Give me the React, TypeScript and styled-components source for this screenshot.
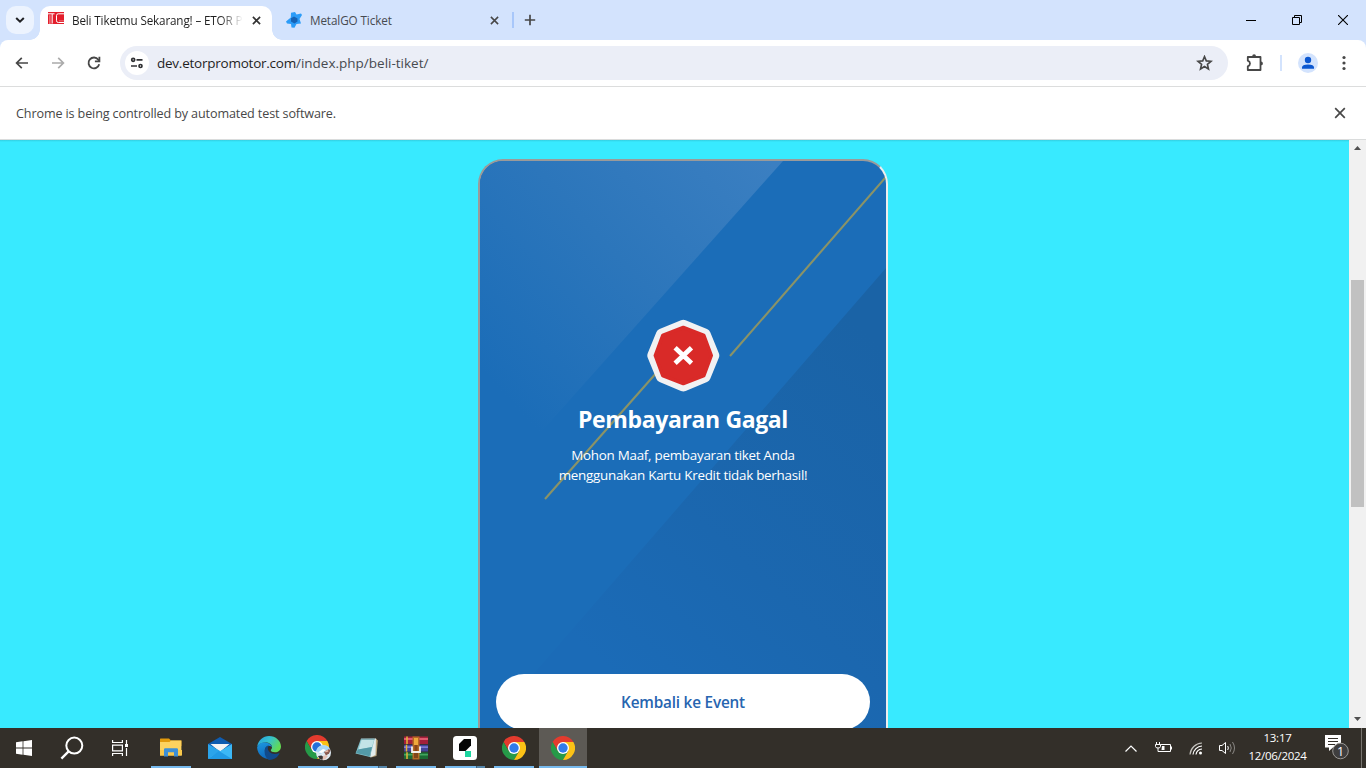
import React from "react";
import styled, { createGlobalStyle } from "styled-components";

const GlobalStyle = createGlobalStyle`
  *, *::before, *::after { box-sizing: border-box; }
  html, body { margin: 0; padding: 0; overflow: hidden; }
  body { font-family: "Open Sans", "Noto Sans", sans-serif; }
  svg { display: block; flex: none; }
`;

const Screen = styled.div`
  width: 1366px;
  height: 768px;
  display: flex;
  flex-direction: column;
  overflow: hidden;
  background: #fff;
`;

const Label = styled.span<{ $size: number; $track?: number; $weight?: number; $color?: string }>`
  font-size: ${(p) => p.$size}px;
  letter-spacing: ${(p) => p.$track ?? 0}px;
  font-weight: ${(p) => p.$weight ?? 400};
  color: ${(p) => p.$color ?? "#1f1f1f"};
  white-space: nowrap;
`;

const Spacer = styled.i<{ $width: number }>`
  flex: none;
  width: ${(p) => p.$width}px;
`;

/* ---------- Tab strip ---------- */

const TabStrip = styled.header`
  flex: none;
  height: 40px;
  display: flex;
  align-items: flex-start;
  background: #d3e3fd;
`;

const TabSearch = styled.button`
  width: 28px;
  height: 28px;
  margin: 6px 6px 0;
  padding: 0;
  border: 0;
  border-radius: 10px;
  background: #ecf3fe;
  display: grid;
  place-items: center;
`;

const Tab = styled.div<{ $active?: boolean }>`
  position: relative;
  width: ${(p) => (p.$active ? 232 : 240)}px;
  height: 34px;
  margin-top: 6px;
  padding: 0 9px 6px ${(p) => (p.$active ? 8 : 14)}px;
  display: flex;
  align-items: center;
  border-radius: 10px 10px 0 0;
  background: ${(p) => (p.$active ? "#fff" : "transparent")};

  &::before,
  &::after {
    content: ${(p) => (p.$active ? '""' : "none")};
    position: absolute;
    bottom: 0;
    width: 10px;
    height: 10px;
  }
  &::before {
    left: -10px;
    background: radial-gradient(circle at 0 0, transparent 9.5px, #fff 10px);
  }
  &::after {
    right: -10px;
    background: radial-gradient(circle at 100% 0, transparent 9.5px, #fff 10px);
  }
`;

const TabTitle = styled.div<{ $fade?: boolean }>`
  flex: 1;
  margin: 0 8px;
  display: flex;
  line-height: 16px;
  ${(p) => p.$fade && "margin-right: 6px; mask-image: linear-gradient(90deg, #000 148px, transparent 171px);"}
`;

const StripDivider = styled.i`
  width: 2px;
  height: 16px;
  margin-top: 12px;
  background: #a8c7fa;
`;

const NewTab = styled.div`
  margin: 14px 0 0 10px;
`;

const WindowControls = styled.div`
  margin-left: auto;
  display: flex;
  height: 40px;
`;

const WindowButton = styled.div`
  width: 46px;
  display: grid;
  place-items: center;
`;

/* ---------- Toolbar ---------- */

const ToolbarBack = styled.div`
  flex: none;
  background: #d3e3fd;
`;

const Toolbar = styled.nav`
  height: 47px;
  border-bottom: 1px solid #dcdddd;
  border-radius: 8px 8px 0 0;
  background: #fff;
  display: flex;
  align-items: center;
  padding-left: 12px;
`;

const NavIcon = styled.div`
  width: 20px;
  margin-right: 16px;
  display: grid;
  place-items: center;
`;

const Omnibox = styled.div`
  width: 1108px;
  height: 34px;
  border-radius: 17px;
  background: #ebeef7;
  display: flex;
  align-items: center;
  padding: 0 15px 0 5px;
`;

const SiteInfo = styled.div`
  width: 24px;
  height: 24px;
  margin-right: 8px;
  border-radius: 50%;
  background: #fff;
  display: grid;
  place-items: center;
`;

const Url = styled.div`
  flex: 1;
  display: flex;
  line-height: 20px;
`;

const ToolbarActions = styled.div`
  flex: 1;
  display: flex;
  align-items: center;
  padding-left: 17px;
`;

const ToolbarDivider = styled.i`
  width: 2px;
  height: 16px;
  margin: 0 16px 0 17px;
  background: #d3e3fd;
`;

const Avatar = styled.div`
  width: 20px;
  height: 20px;
  margin-right: 24px;
  border-radius: 50%;
  overflow: hidden;
  background: #d3e3fd;
`;

/* ---------- Info bar ---------- */

const InfoBar = styled.div`
  flex: none;
  height: 53px;
  border-bottom: 1px solid #dadcdc;
  background: #fff;
  display: flex;
  align-items: center;
  justify-content: space-between;
  padding: 0 20px 0 16px;
`;

/* ---------- Page ---------- */

const Viewport = styled.div`
  flex: none;
  height: 588px;
  display: flex;
`;

const Page = styled.main`
  width: 1349px;
  display: flex;
  justify-content: center;
  align-items: flex-start;
  padding: 19px 0 0 17px;
  background: linear-gradient(#33cfe1, #38eaff 2px);
  overflow: hidden;
`;

const PhoneCard = styled.section`
  position: relative;
  width: 410px;
  height: 600px;
  border: 2px solid;
  border-color: #9a9a9a #eee #eee #9a9a9a;
  border-radius: 25px;
  overflow: hidden;
  background: #1b6db8;
`;

const CardArt = styled.svg`
  position: absolute;
  top: 0;
  left: 0;
`;

const CardContent = styled.div`
  position: relative;
  display: flex;
  flex-direction: column;
  align-items: center;
  padding-top: 157px;
`;

const Heading = styled.h1`
  margin: 9px 0 0;
  line-height: 36px;
  font-size: 23px;
  font-weight: 700;
  letter-spacing: -0.37px;
  color: #fff;
`;

const Message = styled.p`
  width: 256px;
  margin: 8px 0 0;
  text-align: center;
  font-size: 13.4px;
  line-height: 20px;
  letter-spacing: -0.26px;
  color: #fff;
`;

const BackButton = styled.button`
  width: 374px;
  height: 56px;
  margin: 189px 0 0;
  padding: 0;
  border: 0;
  border-radius: 28px;
  background: #fff;
  color: #2765b0;
  font: 600 15.3px "Open Sans", sans-serif;
  letter-spacing: -0.19px;
`;

const Scrollbar = styled.div`
  width: 17px;
  display: flex;
  flex-direction: column;
  align-items: center;
  background: #f1f1f1;
`;

const ScrollArrow = styled.div`
  height: 17px;
  width: 17px;
  padding-bottom: 2px;
  display: grid;
  place-items: center;
`;

const ScrollThumb = styled.div`
  width: 13px;
  height: 227px;
  margin: 123px 0 auto;
  background: #c1c1c1;
`;

/* ---------- Taskbar ---------- */

const Taskbar = styled.footer`
  flex: none;
  height: 40px;
  display: flex;
  background: #332f29;
`;

const TaskItem = styled.div<{ $width?: number; $focused?: boolean }>`
  width: ${(p) => p.$width ?? 49}px;
  height: 40px;
  display: grid;
  place-items: center;
  position: relative;
  &::before {
    content: "";
    position: absolute;
    z-index: 0;
    inset: 0 0 0 1px;
    background: ${(p) => (p.$focused ? "#5d5a55" : "transparent")};
  }
  svg { position: relative; }
`;

const RunningLine = styled.i<{ $full?: boolean; $stacked?: boolean }>`
  position: absolute;
  bottom: 0;
  left: ${(p) => (p.$full ? 1 : 5)}px;
  right: ${(p) => (p.$full ? 0 : 4)}px;
  height: 2px;
  background: ${(p) => (p.$stacked ? "linear-gradient(90deg, #76b9ed 31px, #41617a 31px 32px, #5585a9 32px)" : "#76b9ed")};
`;

const Tray = styled.div`
  margin-left: auto;
  display: flex;
  align-items: center;
`;

const TrayIcon = styled.div<{ $width: number }>`
  width: ${(p) => p.$width}px;
  display: grid;
  place-items: center;
`;

const Clock = styled.div`
  width: 71px;
  display: flex;
  flex-direction: column;
  align-items: center;
  line-height: 18px;
  padding-bottom: 2px;
`;

const DesktopEdge = styled.i`
  width: 5px;
  height: 40px;
  border-left: 1px solid #77746f;
`;

/* ---------- Icons ---------- */

const Cross = ({ size, width = 1.8, color = "#333" }: { size: number; width?: number; color?: string }) => (
  <svg width={size} height={size} viewBox="0 0 10 10" stroke={color} strokeWidth={width} fill="none">
    <path d="M1 1 9 9M9 1 1 9" />
  </svg>
);

const ChromeLogo = () => (
  <svg width="24" height="24" viewBox="0 0 48 48">
    <path d="M24 12H44.8A24 24 0 0 0 3.2 12L13.6 30Z" fill="#e33b2e" />
    <path d="M3.2 12A24 24 0 0 0 24 48L34.4 30 24 24 13.6 30Z" fill="#269a48" />
    <path d="M24 48A24 24 0 0 0 44.8 12H24L34.4 30Z" fill="#fbc116" />
    <circle cx="24" cy="24" r="12" fill="#fff" />
    <circle cx="24" cy="24" r="9.4" fill="#317bea" />
  </svg>
);

const ChromeProfileLogo = () => (
  <svg width="26" height="26" viewBox="0 0 26 26">
    <g transform="scale(.5)">
      <path d="M24 12H44.8A24 24 0 0 0 3.2 12L13.6 30Z" fill="#e33b2e" />
      <path d="M3.2 12A24 24 0 0 0 24 48L34.4 30 13.6 30Z" fill="#269a48" />
      <path d="M24 48A24 24 0 0 0 44.8 12H24L34.4 30Z" fill="#fbc116" />
      <circle cx="24" cy="24" r="12" fill="#fff" />
      <circle cx="24" cy="24" r="9.4" fill="#2470dc" />
    </g>
    <circle cx="18.500" cy="17.800" r="7.500" fill="#dfeaf3" />
    <path d="M11.300 16a7.500 7.500 0 0 1 13.500-2.500l-5 3.500-5 2Z" fill="#a9d6f6" />
    <path d="M13 17.500 18 14 21 15 17 18Z" fill="#fff" />
    <path d="m19 17 5-3 1.500 1.500-1.500 3-3 2Z" fill="#8a5a50" />
    <path d="m20 16 3-1 .5 1.500-3 1Z" fill="#e6b7a6" />
    <path d="m13 21 3.500-.5 2 1.500-1 3-3-1Z" fill="#3b3434" />
    <path d="m18 21 3-1 2 1-3 3.500-2.500.2Z" fill="#e3c1b6" />
  </svg>
);

const WindowsLogo = () => (
  <svg width="16" height="16" viewBox="0 0 16 16" fill="#fff">
    <path d="M0 2.3 6.6 1.3V7.5H0ZM7.4 1.2 16 0V7.5H7.4ZM0 8.4H6.6V14.7L0 13.7ZM7.4 8.4H16V16L7.4 14.8Z" />
  </svg>
);

const SearchGlyph = () => (
  <svg width="24" height="24" viewBox="0 0 24 24" fill="none" stroke="#fff" strokeWidth="2">
    <circle cx="14.3" cy="9.6" r="8" />
    <path d="M8.6 15.4 1.4 22.6" strokeWidth="2.3" />
  </svg>
);

const TaskViewGlyph = () => (
  <svg width="18" height="18" viewBox="0 0 18 18" fill="none" stroke="#fff" strokeWidth="1.2">
    <path d="M1.6 1V3.5H11.4V1M1.6 17V14.5H11.4V17M1.6 6.2H11.4V11.8H1.6ZM15.5 1V5M15.5 9V17" />
    <path d="M14 5h3v3h-3Z" fill="#fff" stroke="none" />
  </svg>
);

const FolderLogo = () => (
  <svg width="22" height="20" viewBox="0 0 22 20">
    <path d="M0 1Q0 .5.6.5H9L11 2.5H21.4V8H0Z" fill="#e29a0c" />
    <path d="M0 4H9.5L11 2.5H21.4V17.5H0Z" fill="#fdd25f" />
    <path d="M0 12H22V17.5H0Z" fill="#f9c84b" />
    <path d="M4 18.5V11.5Q4 10.3 5.2 10.3H16.8Q18 10.3 18 11.5V18.5H14V14.3H8V18.5Z" fill="#3d8fd6" />
  </svg>
);

const MailLogo = () => (
  <svg width="24" height="24" viewBox="0 0 24 24">
    <path d="M0 8 12 1 24 8V12H0Z" fill="#0f5cb0" />
    <path d="M2.5 8H21.5L12 16Z" fill="#f5f4f4" />
    <path d="M0 8 13.5 15.7 0 23Z" fill="#2ba4ea" />
    <path d="M24 8V23H0L3 20.5Z" fill="#3cb8f5" />
    <path d="M24 23H0L11 15Z" fill="#219ae4" />
  </svg>
);

const EdgeLogo = () => (
  <svg width="24" height="24" viewBox="0 0 24 24">
    <defs>
      <linearGradient id="edgeTop" x1="0" y1="0" x2="1" y2="0.5">
        <stop offset="0" stopColor="#249fe0" />
        <stop offset="0.5" stopColor="#35c1cf" />
        <stop offset="1" stopColor="#62da54" />
      </linearGradient>
      <linearGradient id="edgeLeft" x1="0" y1="0" x2="0.3" y2="1">
        <stop offset="0" stopColor="#1c98e0" />
        <stop offset="1" stopColor="#1069bd" />
      </linearGradient>
    </defs>
    <path d="M.2 10.5C1.2 4.300 6 0 12 0 18.800 0 24 5 24 10.400c0 3.800-3 5.900-6 5.900-2.600 0-4.200-1-4.200-2 0-.7 1.200-1 1.200-3C15 8.700 12 6.600 8.700 6.600 4.600 6.600 1.400 8.600.2 10.500Z" fill="url(#edgeTop)" />
    <path d="M.1 11.500C1 8 4.800 6 8.700 6.600 12 7 14.800 8.800 15 11.200 13.500 9.200 9 9.500 8 13c-1.200 5 3.500 9.500 8.200 9.300A12 12 0 0 1 .1 11.500Z" fill="url(#edgeLeft)" />
    <path d="M8 13c.5-2.200 1.800-3.500 3.800-3.800C8.500 14 14 20 21.800 17.300c.6-.2.900.2.5.7A12 12 0 0 1 12 24C8 21.500 7 17 8 13Z" fill="#114a8b" />
  </svg>
);

const NotepadLogo = () => (
  <svg width="24" height="24" viewBox="0 0 24 24">
    <path d="M20.500 2 22.800 4.500 21.500 20 16 21.500Z" fill="#b8a27a" />
    <path d="M18 3 21 2.500 20.500 19 15 21.500Z" fill="#e3ecec" />
    <path d="M6 2.500 19.800 2.300 15 21 .5 17.500Z" fill="#86c2cb" />
    <path d="M6.500 4 19 4 17 11 3.500 13.500Z" fill="#c3e4e7" />
    <path d="M3 13.500 17 11 14.500 20.300 1 17Z" fill="#539aa7" />
    <path d="M6.500 2.800H20.500" stroke="#7a8585" strokeWidth="1.500" strokeDasharray="1 1" />
  </svg>
);

const WinrarLogo = () => (
  <svg width="24" height="24" viewBox="0 0 24 24">
    <path d="M0 .5H24V8H0Z" fill="#a3203a" />
    <path d="M0 2H24V4H0Z" fill="#df5a70" />
    <path d="M0 8.800H24V15.500H0Z" fill="#44439a" />
    <path d="M0 10.300H24V12H0Z" fill="#7d7bd4" />
    <path d="M0 16.300H24V23H0Z" fill="#1b6b34" />
    <path d="M0 17.800H24V19.500H0Z" fill="#41a55e" />
    <path d="M3 .5V8M2.500 8.800V15.500M3 16.300V23" stroke="#e7b43a" strokeWidth="1.500" />
    <path d="M8.500.5H15.500V23.500H8.500Z" fill="#b46a25" />
    <path d="M10 2H14V9H10Z" fill="#f0a93c" />
    <path d="M8 10.500V16H16V10.500" fill="none" stroke="#f2efe8" strokeWidth="1.800" />
    <path d="M10.500 9H13.500V15H10.500Z" fill="#8b4517" />
    <path d="M10 17H14V22H10Z" fill="#804719" />
  </svg>
);

const QuillLogo = () => (
  <svg width="24" height="24" viewBox="0 0 24 24">
    <rect width="24" height="24" rx="3.500" fill="#fff" />
    <path d="M11 3H18V9.500L12.500 15H6V8Z" fill="#050505" />
    <path d="M12 15H18V21H12Z" fill="#1cd6a0" />
  </svg>
);

const FailedBadge = () => (
  <svg width="74" height="74" viewBox="-37.3 -37.500 74 74">
    <path
      d="M0-29.800 21.400-21 30 0 21.400 21 0 30-21.400 21-30 0-21.400-21Z"
      fill="#f1f1f3"
      stroke="#f1f1f3"
      strokeWidth="12"
      strokeLinejoin="round"
    />
    <path
      d="M0-28 20.600-20 28 0 20.600 20 0 28-20.600 20-28 0-20.600-20Z"
      fill="#d92a28"
      stroke="#d92a28"
      strokeWidth="3.500"
      strokeLinejoin="round"
    />
    <path d="M-8.200-7.800 8.200 7.800M8.200-7.800-8.200 7.800" stroke="#fff" strokeWidth="4.700" />
  </svg>
);

const Background = () => (
  <CardArt width="406" height="596" viewBox="0 0 406 596">
    <defs>
      <linearGradient id="sheen" gradientUnits="userSpaceOnUse" x1="290" y1="0" x2="30" y2="240">
        <stop offset="0" stopColor="#3b7fc1" />
        <stop offset="0.5" stopColor="#2c76bb" />
        <stop offset="1" stopColor="#1b6db8" />
      </linearGradient>
      <linearGradient id="shade" gradientUnits="userSpaceOnUse" x1="406" y1="190" x2="120" y2="500">
        <stop offset="0" stopColor="#1a63a6" />
        <stop offset="0.600" stopColor="#1b67af" />
        <stop offset="1" stopColor="#1b6bb7" />
      </linearGradient>
    </defs>
    <path d="M0 0H303L30 306 0 306Z" fill="url(#sheen)" />
    <path d="M406 107 50 517V596H406Z" fill="url(#shade)" />
    <path d="M406 16 250 195M178 210 65 338" stroke="#8a9367" strokeWidth="2.100" />
  </CardArt>
);

export default function App() {
  return (
    <>
      <GlobalStyle />
      <Screen>
        <TabStrip>
          <TabSearch aria-label="Search tabs">
            <svg width="10" height="8" viewBox="0 0 10 8" fill="none" stroke="#202124" strokeWidth="2">
              <path d="m1.200 2 3.800 3.700L8.800 2" />
            </svg>
          </TabSearch>
          <Tab $active>
            <svg width="16" height="16" viewBox="0 0 16 16">
              <path d="M0 0H16V12H0Z" fill="#e31e2b" />
              <path d="M0 1.800H6.500M4.200 2V11.500M16 1.800H10.300Q8.500 1.800 8.500 3.600V8.700Q8.500 10.500 10.300 10.500H16" stroke="#fff" strokeWidth="1" fill="none" />
              <path d="M1.500 3.200V12M2.800 3.200V12M16 8.800H11" stroke="#f3a0a5" strokeWidth=".6" />
            </svg>
            <TabTitle $fade>
              <Label $size={11.7} $track={-0.15}>Beli Tiketmu Sekarang! – ETOR P</Label>
            </TabTitle>
            <Cross size={9} />
            <Spacer $width={2} />
          </Tab>
          <Tab>
            <svg width="16" height="16" viewBox="0 0 16 16">
              <path d="M5 .8 9 0 10.500 2.500 15 1.500 16 3 13.500 7 15 11.500 10.500 12 8.500 15.800 5.500 15.500 5 12 1 11.500 0 9.500 4.800 5.500Z" fill="#2b9cf8" />
              <path d="M8 4.500 11.500 6.500V9.500L8.300 11.500 5 9.600V6.300Z" fill="#1763b5" />
            </svg>
            <TabTitle>
              <Label $size={11.7} $track={-0.1} $color="#474a50">MetalGO Ticket</Label>
            </TabTitle>
            <Cross size={9} color="#474747" width={1.7} />
            <Spacer $width={4} />
          </Tab>
          <StripDivider />
          <NewTab>
            <svg width="12" height="12" viewBox="0 0 12 12" stroke="#474747" strokeWidth="1.700">
              <path d="M6 .8V11.200M.8 6H11.200" />
            </svg>
          </NewTab>
          <WindowControls>
            <WindowButton>
              <svg width="10" height="10" viewBox="0 0 10 10"><path d="M0 5H10V6H0Z" /></svg>
            </WindowButton>
            <WindowButton>
              <svg width="10" height="10" viewBox="0 0 10 10" fill="none" stroke="#000">
                <path d="M.5 2.500H7.500V9.500H.5ZM2.500 2.500V.5H9.500V7.500H7.500" />
              </svg>
            </WindowButton>
            <WindowButton>
              <svg width="10" height="10" viewBox="0 0 10 10" stroke="#000" strokeWidth="1.100"><path d="M0 0 10 10M10 0 0 10" /></svg>
            </WindowButton>
          </WindowControls>
        </TabStrip>

        <ToolbarBack>
          <Toolbar>
            <NavIcon>
              <svg width="14" height="12" viewBox="0 0 14 12" fill="none" stroke="#474747" strokeWidth="1.700">
                <path d="M13 6H2M6.800 .8 1.600 6 6.800 11.200" />
              </svg>
            </NavIcon>
            <NavIcon>
              <svg width="14" height="12" viewBox="0 0 14 12" fill="none" stroke="#ababab" strokeWidth="1.700">
                <path d="M1 6H12M7.200 .8 12.400 6 7.200 11.200" />
              </svg>
            </NavIcon>
            <NavIcon>
              <svg width="14" height="14" viewBox="0 0 14 14" fill="none" stroke="#474747" strokeWidth="1.800">
                <path d="M12.200 8.200A5.400 5.400 0 1 1 11.300 3.700L12.300 5" />
                <path d="M12.400.8V5.300H7.900" />
              </svg>
            </NavIcon>
            <Omnibox>
              <SiteInfo>
                <svg width="14" height="12" viewBox="0 0 14 12" fill="none" stroke="#303134" strokeWidth="1.700">
                  <circle cx="3.200" cy="2.800" r="1.500" />
                  <path d="M6.500 2.800H12.500M1 9H7" />
                  <circle cx="10.500" cy="9" r="1.500" />
                </svg>
              </SiteInfo>
              <Url>
                <Label $size={13.5} $track={-0.24}>dev.etorpromotor.com</Label>
                <Label $size={13.5} $track={0} $color="#474a50">/index.php/beli-tiket/</Label>
              </Url>
              <svg width="17" height="16" viewBox="0 0 17 16" fill="none" stroke="#474747" strokeWidth="1.600">
                <path d="M8.500 1.600 10.300 5.900 15 6.300 11.400 9.300 12.500 14 8.500 11.500 4.500 14 5.600 9.300 2 6.300 6.700 5.900Z" />
              </svg>
            </Omnibox>
            <ToolbarActions>
              <svg width="18" height="18" viewBox="0 0 18 18" fill="none" stroke="#474747" strokeWidth="1.800" strokeLinejoin="round">
                <path d="M2.800 3H15.500V16H2.800V12.300Q5 11.500 5 9.500 5 7.500 2.800 6.700Z" />
                <path d="M7.200 2.200a1.900 1.900 0 0 1 3.800 0ZM16 7.500a1.900 1.900 0 0 1 0 3.800Z" fill="#474747" stroke="none" />
              </svg>
              <ToolbarDivider />
              <Avatar>
                <svg width="20" height="20" viewBox="0 0 20 20" fill="#0b57d0">
                  <circle cx="10" cy="7" r="3.200" />
                  <path d="M4 15.800V14.600Q4 11.500 10 11.500T16 14.600V15.800Z" />
                </svg>
              </Avatar>
              <svg width="4" height="16" viewBox="0 0 4 16" fill="#474747">
                <circle cx="2" cy="2.500" r="1.600" />
                <circle cx="2" cy="8" r="1.600" />
                <circle cx="2" cy="13.500" r="1.600" />
              </svg>
            </ToolbarActions>
          </Toolbar>
        </ToolbarBack>

        <InfoBar>
          <Label $size={12.6} $track={-0.125} $color="#474747">Chrome is being controlled by automated test software.</Label>
          <Cross size={12} color="#474747" width={1.4} />
        </InfoBar>

        <Viewport>
          <Page>
            <PhoneCard>
              <Background />
              <CardContent>
                <FailedBadge />
                <Heading>Pembayaran Gagal</Heading>
                <Message>Mohon Maaf, pembayaran tiket Anda menggunakan Kartu Kredit tidak berhasil!</Message>
                <BackButton>Kembali ke Event</BackButton>
              </CardContent>
            </PhoneCard>
          </Page>
          <Scrollbar>
            <ScrollArrow>
              <svg width="7" height="4" viewBox="0 0 7 4" fill="#505050"><path d="M0 4 3.500 0 7 4Z" /></svg>
            </ScrollArrow>
            <ScrollThumb />
            <ScrollArrow>
              <svg width="7" height="4" viewBox="0 0 7 4" fill="#505050"><path d="M0 0H7L3.500 4Z" /></svg>
            </ScrollArrow>
          </Scrollbar>
        </Viewport>

        <Taskbar>
          <TaskItem $width={48}><WindowsLogo /></TaskItem>
          <TaskItem $width={48}><SearchGlyph /></TaskItem>
          <TaskItem $width={48}><TaskViewGlyph /></TaskItem>
          <Spacer $width={2} />
          <TaskItem><FolderLogo /><RunningLine /></TaskItem>
          <TaskItem><MailLogo /></TaskItem>
          <TaskItem><EdgeLogo /></TaskItem>
          <TaskItem><ChromeProfileLogo /><RunningLine /></TaskItem>
          <TaskItem><NotepadLogo /><RunningLine $stacked /></TaskItem>
          <TaskItem><WinrarLogo /><RunningLine /></TaskItem>
          <TaskItem><QuillLogo /><RunningLine $stacked /></TaskItem>
          <TaskItem><ChromeLogo /><RunningLine /></TaskItem>
          <TaskItem $focused><ChromeLogo /><RunningLine $full /></TaskItem>
          <Tray>
            <TrayIcon $width={30}>
              <svg width="12" height="7" viewBox="0 0 12 7" fill="none" stroke="#fff" strokeWidth="1.200"><path d="M.5 6.500 6 1 11.500 6.500" /></svg>
            </TrayIcon>
            <TrayIcon $width={34}>
              <svg width="17" height="14" viewBox="0 0 17 14" fill="none" stroke="#fff">
                <path d="M5.500 3.500H15.500V10.500H5.500M16.500 5.500V8.500M1.500 1V3M4.500 1V3M.5 3.500H5.500V5.500Q5.500 7 3 7T.5 5.500ZM3 7V10.500H6" />
                <path d="M7 5H9.500V9H6.500Z" fill="#fff" stroke="none" />
              </svg>
            </TrayIcon>
            <TrayIcon $width={32}>
              <svg width="14" height="14" viewBox="0 0 14 14" fill="none" stroke="#fff" strokeWidth="1.200">
                <path d="M1 13.500A12.500 12.500 0 0 1 13 2" stroke="#c4c2be" />
                <path d="M4 13.500A9.500 9.500 0 0 1 13 5M7 13.500A6.500 6.500 0 0 1 13 8" />
                <circle cx="11.500" cy="12" r="1.500" fill="#fff" stroke="none" />
              </svg>
            </TrayIcon>
            <TrayIcon $width={30}>
              <svg width="17" height="14" viewBox="0 0 17 14" fill="none" stroke="#fff">
                <path d="M.5 4.500H3L6.500 1.500V12.500L3 9.500H.5Z" />
                <path d="M8.700 5Q10 7 8.700 9" />
                <path d="M11 3Q13.500 7 11 11M13.500 1Q17.500 7 13.500 13" stroke="#8b8985" />
              </svg>
            </TrayIcon>
            <Clock>
              <Label $size={11.5} $track={-0.25} $color="#fff">13:17</Label>
              <Label $size={11.5} $track={-0.3} $color="#fff">12/06/2024</Label>
            </Clock>
            <TrayIcon $width={48}>
              <svg width="26" height="26" viewBox="0 0 26 26">
                <path d="M1 0H17V12.500H9L5 16V12.500H1Z" fill="#fff" />
                <path d="M4 3.500H14M4 6.500H14M4 9.500H11" stroke="#332f29" />
                <circle cx="16.500" cy="16" r="7.800" fill="#3f3e3e" stroke="#9a9894" />
                <text x="16.500" y="20.500" textAnchor="middle" fontFamily="Open Sans" fontSize="12.500" fill="#fff">1</text>
              </svg>
            </TrayIcon>
            <DesktopEdge />
          </Tray>
        </Taskbar>
      </Screen>
    </>
  );
}
